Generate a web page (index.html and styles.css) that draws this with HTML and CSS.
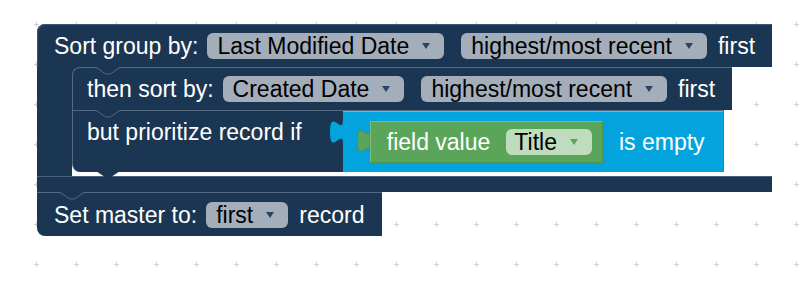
FILE: index.html
```html
<!DOCTYPE html>
<html lang="en">
<head>
    <meta charset="UTF-8">
    <title>Sort rules</title>
    <link rel="stylesheet" href="styles.css">
</head>
<body>
    <div class="workspace">
        <!-- сетка рабочей области -->
        <svg class="grid" width="807" height="287">
            <defs>
                <pattern id="dots" width="40" height="40" x="16" y="4" patternUnits="userSpaceOnUse">
                    <rect x="18" y="20" width="5" height="1" fill="#cfcfcf"></rect>
                    <rect x="20" y="18" width="1" height="5" fill="#cfcfcf"></rect>
                </pattern>
            </defs>
            <rect width="807" height="287" fill="url(#dots)"></rect>
        </svg>

        <div class="stack">
            <div class="block sort">
                <div class="row head">
                    <span class="label">Sort group by:</span>
                    <span class="dropdown">Last Modified Date<i class="arrow"></i></span>
                    <span class="dropdown">highest/most recent<i class="arrow"></i></span>
                    <span class="label">first</span>
                </div>
                <div class="c-body">
                    <div class="arm"></div>
                    <div class="inner">
                        <div class="block then">
                            <svg class="notch" width="24" height="8">
                                <polygon points="0,0 9.6,6.4 14.4,6.4 24,0" fill="#1b3653"></polygon>
                                <polyline points="0,0.5 9.6,6.9 14.4,6.9 24,0.5" fill="none" stroke="#55697f"></polyline>
                            </svg>
                            <span class="label">then sort by:</span>
                            <span class="dropdown">Created Date<i class="arrow"></i></span>
                            <span class="dropdown">highest/most recent<i class="arrow"></i></span>
                            <span class="label">first</span>
                        </div>
                        <div class="block prior">
                            <svg class="notch" width="24" height="8">
                                <polygon points="0,0 9.6,6.4 14.4,6.4 24,0" fill="#1b3653"></polygon>
                                <polyline points="0,0.5 9.6,6.9 14.4,6.9 24,0.5" fill="none" stroke="#55697f"></polyline>
                            </svg>
                            <span class="label top">but prioritize record if</span>
                            <div class="block value">
                                <svg class="tab" width="13" height="24" viewBox="0 5 8 15" preserveAspectRatio="none">
                                    <path d="M8,5 C8,15 0,-3 0,12.5 C0,28 8,10 8,20 Z" fill="#03a3de"></path>
                                </svg>
                                <div class="block field">
                                    <svg class="tab" width="13" height="24" viewBox="0 5 8 15" preserveAspectRatio="none">
                                        <path d="M8,5 C8,15 0,-3 0,12.5 C0,28 8,10 8,20 Z" fill="#5ba55b" stroke="#4a8f4a" stroke-width="0.6"></path>
                                    </svg>
                                    <span class="label">field value</span>
                                    <span class="dropdown light">Title<i class="arrow"></i></span>
                                </div>
                                <span class="label">is empty</span>
                            </div>
                            <svg class="next-tab" width="24" height="7">
                                <polygon points="0,0 9.6,6.4 14.4,6.4 24,0" fill="#1b3653"></polygon>
                            </svg>
                        </div>
                    </div>
                </div>
                <div class="foot"></div>
            </div>

            <div class="block master">
                <svg class="notch" width="24" height="8">
                    <polygon points="0,0 9.6,6.4 14.4,6.4 24,0" fill="#1b3653"></polygon>
                    <polyline points="0,0.5 9.6,6.9 14.4,6.9 24,0.5" fill="none" stroke="#55697f"></polyline>
                </svg>
                <span class="label">Set master to:</span>
                <span class="dropdown">first<i class="arrow"></i></span>
                <span class="label">record</span>
            </div>
        </div>
    </div>
</body>
</html>
```

FILE: styles.css
```css
body {
    margin: 0;
    background: #ffffff;
    font-family: "Liberation Sans", Arial, sans-serif;
    font-size: 23px;
}

.workspace {
    position: relative;
    width: 807px;
    height: 287px;
    overflow: hidden;
    padding: 24px 0 0 37px;
    box-sizing: border-box;
}

.grid {
    position: absolute;
    top: 0;
    left: 0;
}

.stack {
    position: relative;
    display: inline-flex;
    flex-direction: column;
    align-items: flex-start;
}

.block {
    position: relative;
    box-sizing: border-box;
}

.label {
    color: #ffffff;
    line-height: 26px;
    white-space: nowrap;
}

/* Выпадающие списки */
.dropdown {
    display: flex;
    align-items: center;
    height: 26px;
    line-height: 26px;
    padding: 0 14px 0 10px;
    background: #a4aebb;
    color: #000000;
    border-radius: 6px;
    white-space: nowrap;
}

.arrow {
    width: 0;
    height: 0;
    margin-left: 13px;
    border-left: 4px solid transparent;
    border-right: 4px solid transparent;
    border-top: 6px solid #2a4463;
}

.label + .dropdown {
    margin-left: 9px;
}

.dropdown + .dropdown {
    margin-left: 17px;
}

.dropdown + .label {
    margin-left: 11px;
}

.row,
.then,
.master {
    display: flex;
    align-items: center;
    background: #1b3653;
}

/* Внешний блок с C-формой */
.sort {
    display: flex;
    flex-direction: column;
}

.head {
    height: 43px;
    padding: 0 17px;
    border-top-left-radius: 8px;
    box-shadow: inset 1px 1px 0 #3f5670;
}

.c-body {
    display: flex;
    background: linear-gradient(#1b3653, #1b3653) 35px 0 / 10px 10px no-repeat;
}

.arm {
    width: 35px;
    background: #1b3653;
}

.inner {
    display: flex;
    flex-direction: column;
    align-items: flex-start;
    padding-bottom: 4px;
}

.then {
    height: 43px;
    padding: 0 17px 0 14px;
    border-top: 1px solid #55697f;
    border-left: 1px solid #55697f;
    border-top-left-radius: 8px;
}

.prior {
    display: flex;
    align-items: flex-start;
    height: 62px;
    background: #1b3653;
    border-top: 1px solid #55697f;
    border-left: 1px solid #55697f;
    border-bottom-left-radius: 8px;
}

.prior .label.top {
    padding: 8px 41px 0 14px;
}

.notch {
    position: absolute;
    top: -1px;
    left: 23px;
}

.next-tab {
    position: absolute;
    bottom: -6px;
    left: 23px;
}

.foot {
    height: 16px;
    background: #1b3653;
    border-top: 1px solid #4b6077;
    box-sizing: border-box;
}

/* Блоки условий */
.value {
    display: flex;
    align-items: center;
    height: 61px;
    padding: 0 18px 0 27px;
    background: #03a3de;
    border-top: 1px solid #4cc1ec;
    border-right: 1px solid #0b8dc0;
}

.value > .label {
    margin-left: 16px;
}

.field {
    display: flex;
    align-items: center;
    height: 42px;
    padding: 0 10px 0 16px;
    background: #5ba55b;
    border: 1px solid #4a8f4a;
    border-top-color: #7fbb7f;
    border-left-color: #7fbb7f;
}

.field .dropdown {
    margin-left: 16px;
    padding-left: 8px;
}

.tab {
    position: absolute;
    left: -13px;
    top: 8px;
}

.field .tab {
    top: 7px;
    left: -14px;
}

.dropdown.light {
    background: #bfdcbf;
}

.dropdown.light .arrow {
    border-top-color: #5ba55b;
}

.master {
    height: 44px;
    padding: 0 18px 0 17px;
    border-top: 1px solid #55697f;
    border-bottom-left-radius: 8px;
}
```
